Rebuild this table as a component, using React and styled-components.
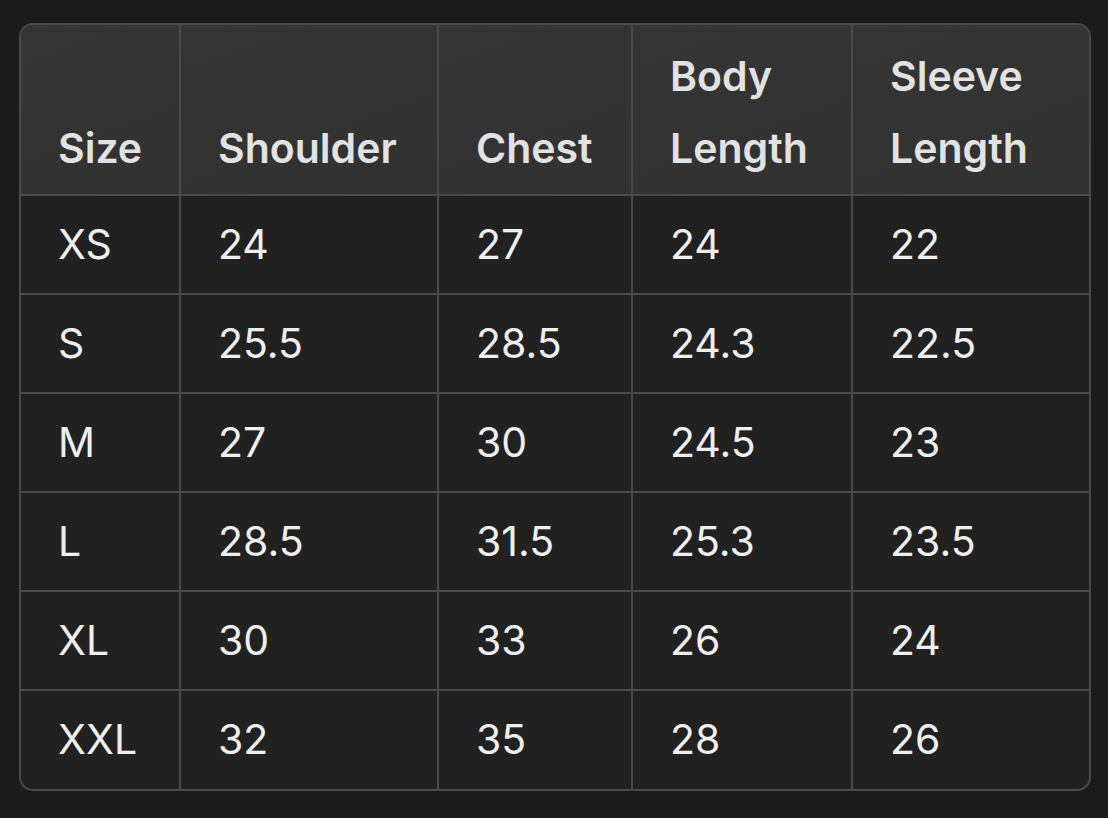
import React from 'react';
import styled, { createGlobalStyle } from 'styled-components';

const GlobalStyle = createGlobalStyle`
  html, body {
    margin: 0;
    padding: 0;
    background: #1b1b1b;
  }
  body {
    font-family: Inter, "Noto Sans", "Liberation Sans", sans-serif;
    -webkit-font-smoothing: antialiased;
  }
`;

const Page = styled.div`
  padding: 23px 18px 28px 19px;
`;

const TableFrame = styled.div`
  width: 1072px;
  box-sizing: border-box;
  border: 2px solid #4a4a4a;
  border-radius: 14px;
  overflow: hidden;
  background: #212121;
`;

const Grid = styled.div`
  display: grid;
  grid-template-columns: 160px 258px 194px 220px 236px;
`;

const Cell = styled.div`
  box-sizing: border-box;
  display: flex;
  padding: 0 12px 0 37px;
  border-right: ${p => (p.$lastCol ? 'none' : '2px solid #4a4a4a')};
  border-bottom: ${p => (p.$lastRow ? 'none' : '2px solid #4a4a4a')};
`;

const HeadCell = styled(Cell)`
  height: 171px;
  align-items: flex-end;
  padding-bottom: 10px;
  background: linear-gradient(160deg, #353535 0%, #313131 100%);
  color: #e2e2e2;
  font-size: 41px;
  font-weight: 600;
  line-height: 72px;
`;

const BodyCell = styled(Cell)`
  height: ${p => (p.$lastRow ? '98px' : '99px')};
  align-items: center;
  color: #efefef;
  font-size: 41px;
  font-weight: 400;
  line-height: 1.2;
`;

const headers = ['Size', 'Shoulder', 'Chest', 'Body Length', 'Sleeve Length'];

const rows = [
  ['XS', '24', '27', '24', '22'],
  ['S', '25.5', '28.5', '24.3', '22.5'],
  ['M', '27', '30', '24.5', '23'],
  ['L', '28.5', '31.5', '25.3', '23.5'],
  ['XL', '30', '33', '26', '24'],
  ['XXL', '32', '35', '28', '26'],
];

export default function App() {
  return (
    <>
      <GlobalStyle />
      <Page>
        <TableFrame>
          <Grid>
            {headers.map((h, i) => (
              <HeadCell key={h} $lastCol={i === headers.length - 1}>
                <span>
                  {h.split(' ').map((w, j) => (
                    <React.Fragment key={w}>
                      {j > 0 && <br />}
                      {w}
                    </React.Fragment>
                  ))}
                </span>
              </HeadCell>
            ))}
            {rows.map((row, r) =>
              row.map((v, c) => (
                <BodyCell
                  key={`${r}-${c}`}
                  $lastCol={c === row.length - 1}
                  $lastRow={r === rows.length - 1}
                >
                  {v}
                </BodyCell>
              ))
            )}
          </Grid>
        </TableFrame>
      </Page>
    </>
  );
}
